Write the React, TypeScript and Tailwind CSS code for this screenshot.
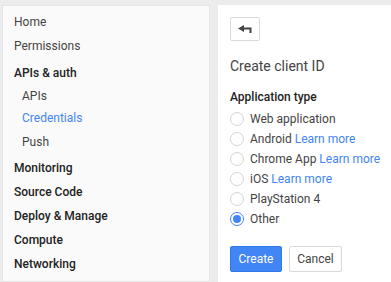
export default function App() {
    const nav = [
        { label: "Home", cls: "h-6 pl-[11px] text-[#444]" },
        { label: "Permissions", cls: "h-6 pl-[11px] text-[#444]" },
        { label: "APIs & auth", cls: "mt-[3px] h-6 pl-[11px] font-medium text-[#222]" },
        { label: "APIs", cls: "h-[21px] pl-[19px] text-[#444]" },
        { label: "Credentials", cls: "h-6 pl-[19px] text-[#4285f4]" },
        { label: "Push", cls: "h-6 pl-[19px] text-[#444]" },
        { label: "Monitoring", cls: "mt-[2px] h-6 pl-[11px] font-medium text-[#222]" },
        { label: "Source Code", cls: "h-6 pl-[11px] font-medium text-[#222]" },
        { label: "Deploy & Manage", cls: "h-6 pl-[11px] font-medium text-[#222]" },
        { label: "Compute", cls: "h-6 pl-[11px] font-medium text-[#222]" },
        { label: "Networking", cls: "h-6 pl-[11px] font-medium text-[#222]" },
    ];
    const types = [
        { label: "Web application" },
        { label: "Android", more: true },
        { label: "Chrome App", more: true },
        { label: "iOS", more: true },
        { label: "PlayStation 4" },
        { label: "Other", checked: true },
    ];

    return (
        <div
            className="flex h-[282px] gap-2 overflow-hidden bg-[#ececec] pl-[2px] pt-[5px] text-[12px]"
            style={{ fontFamily: "Roboto, 'Liberation Sans', sans-serif" }}
        >
            <nav className="flex w-[208px] shrink-0 flex-col border border-[#e4e4e4] bg-[#fafafa] pt-[4px]">
                {nav.map((n) => (
                    <div key={n.label} className={"flex shrink-0 items-center " + n.cls}>
                        {n.label}
                    </div>
                ))}
            </nav>

            <main className="flex flex-1 flex-col bg-white pl-3 pt-3">
                <button className="flex h-6 w-[30px] items-center justify-center rounded-[2px] border border-[#d9d9d9] bg-white">
                    <svg width="14" height="8" viewBox="0 0 14 8">
                        <path d="M0 3.5 L6 0 L6 7 Z" fill="#444" />
                        <path d="M5 3.5 H12.5 V8" fill="none" stroke="#444" strokeWidth="2" />
                    </svg>
                </button>

                <h1 className="mt-[17px] text-[14px] leading-4 text-[#444]">Create client ID</h1>

                <div className="mt-[15px] leading-4 font-medium text-[#222]">Application type</div>

                <div className="mt-[4px] flex flex-col">
                    {types.map((t) => (
                        <label key={t.label} className="flex h-5 items-center gap-[6px] text-[#444]">
                            {t.checked ? (
                                <span className="flex size-[14px] items-center justify-center rounded-full border border-[#4285f4] bg-white">
                                    <span className="size-[8px] rounded-full bg-[#4285f4]" />
                                </span>
                            ) : (
                                <span className="size-[14px] rounded-full border border-[#d4d4d4] bg-white" />
                            )}
                            <span>
                                {t.label}
                                {t.more && <span className="text-[#4285f4]"> Learn more</span>}
                            </span>
                        </label>
                    ))}
                </div>

                <div className="mt-[17px] flex gap-[7px]">
                    <button className="h-[26px] w-[52px] rounded-[2px] border border-[#3079ed] bg-[#4285f4] text-white">
                        Create
                    </button>
                    <button className="h-[26px] w-[53px] rounded-[2px] border border-[#d9d9d9] bg-white text-[#444]">
                        Cancel
                    </button>
                </div>
            </main>
        </div>
    );
}
